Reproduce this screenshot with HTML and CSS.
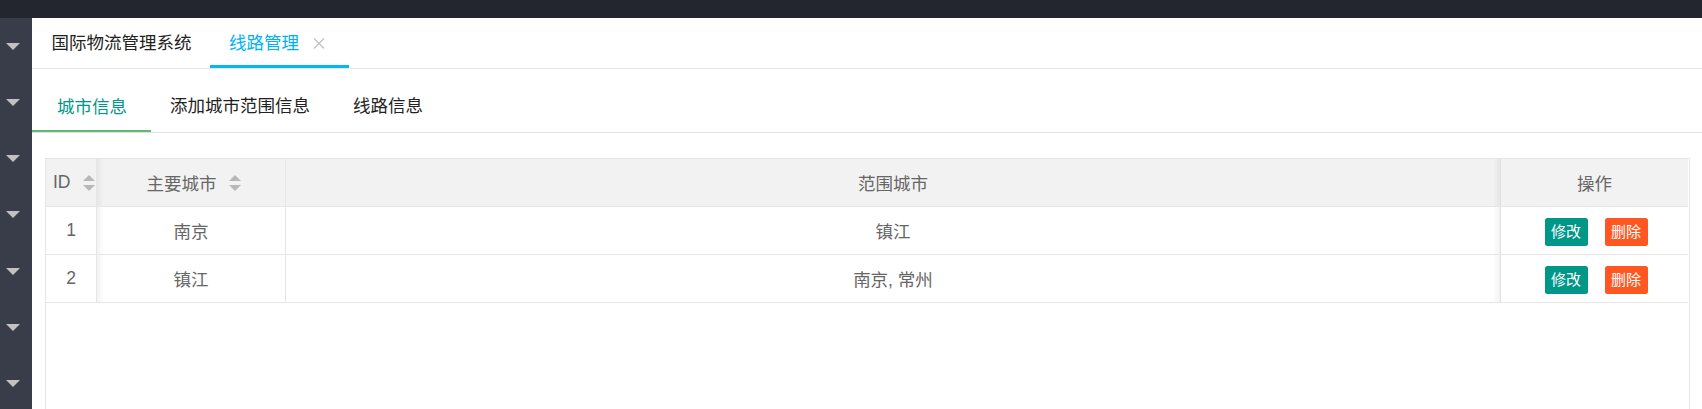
FILE: index.html
```html
<!DOCTYPE html>
<html lang="zh-CN">
<head>
<meta charset="utf-8">
<title>线路管理</title>
<link rel="stylesheet" href="styles.css">
</head>
<body>
<div class="topbar"></div>
<div class="layout">
  <aside class="side">
    <ul class="side-nav">
      <li><span class="arrow"></span></li>
      <li><span class="arrow"></span></li>
      <li><span class="arrow"></span></li>
      <li><span class="arrow"></span></li>
      <li><span class="arrow"></span></li>
      <li><span class="arrow"></span></li>
      <li><span class="arrow"></span></li>
    </ul>
  </aside>
  <main class="main">
    <ul class="page-tabs">
      <li class="page-tab">国际物流管理系统</li>
      <li class="page-tab active">线路管理<svg class="close" width="12" height="11" viewBox="0 0 12 11"><path d="M1 0.5 L11 10.5 M11 0.5 L1 10.5" stroke="#c4c4c4" stroke-width="1.4" fill="none"/></svg></li>
    </ul>
    <ul class="sub-tabs">
      <li class="sub-tab active">城市信息</li>
      <li class="sub-tab second">添加城市范围信息</li>
      <li class="sub-tab third">线路信息</li>
    </ul>
    <div class="grid-table">
      <div class="row head">
        <div class="cell c1 id-head">ID<svg class="sort" width="12" height="16" viewBox="0 0 12 16"><polygon points="0,6 6,0 12,6" fill="#b8b8b8"/><polygon points="0,10 12,10 6,16" fill="#b8b8b8"/></svg></div>
        <div class="cell c2 city-head">主要城市<svg class="sort" width="12" height="16" viewBox="0 0 12 16"><polygon points="0,6 6,0 12,6" fill="#b8b8b8"/><polygon points="0,10 12,10 6,16" fill="#b8b8b8"/></svg></div>
        <div class="cell c3">范围城市</div>
        <div class="cell c4">操作</div>
      </div>
      <div class="row">
        <div class="cell c1">1</div>
        <div class="cell c2">南京</div>
        <div class="cell c3">镇江</div>
        <div class="cell c4 ops"><span class="btn edit">修改</span><span class="btn del">删除</span></div>
      </div>
      <div class="row">
        <div class="cell c1">2</div>
        <div class="cell c2">镇江</div>
        <div class="cell c3">南京, 常州</div>
        <div class="cell c4 ops"><span class="btn edit">修改</span><span class="btn del">删除</span></div>
      </div>
    </div>
  </main>
</div>
</body>
</html>
```
FILE: styles.css
```css
* { box-sizing: border-box; }
html, body {
  margin: 0;
  padding: 0;
  width: 1702px;
  height: 409px;
  overflow: hidden;
  background: #fff;
  font-family: "Liberation Sans", "Noto Sans CJK SC", sans-serif;
}
ul { list-style: none; margin: 0; padding: 0; }

.topbar {
  height: 18px;
  background: #23262e;
}
.layout {
  display: flex;
  height: 391px;
}
.side {
  width: 32px;
  flex: none;
  background: #393d49;
  overflow: hidden;
}
.side-nav li {
  height: 56.28px;
  display: flex;
  align-items: center;
  padding-left: 6px;
}
.arrow {
  width: 0;
  height: 0;
  border-left: 7px solid transparent;
  border-right: 7px solid transparent;
  border-top: 7px solid #c2c2c2;
}

.main {
  flex: 1;
  min-width: 0;
  display: flex;
  flex-direction: column;
  overflow: hidden;
}

.page-tabs {
  display: flex;
  flex: none;
  height: 51px;
  border-bottom: 1px solid #e6e6e6;
}
.page-tab {
  height: 50px;
  line-height: 50px;
  font-size: 17.5px;
  color: #222;
  padding: 0 18.5px 0 19.5px;
  display: flex;
  align-items: center;
}
.page-tab.active {
  color: #00b2f2;
  padding: 0 24px 0 19px;
  border-bottom: 3px solid #00b7f7;
  height: 50px;
  padding-top: 3px;
}
.close {
  margin-left: 14px;
  margin-top: 1px;
}

.sub-tabs {
  display: flex;
  flex: none;
  margin-top: 12px;
  height: 52px;
  border-bottom: 1px solid #e2e2e2;
}
.sub-tab {
  height: 51px;
  line-height: 51px;
  font-size: 17.5px;
  color: #222;
  padding: 0 21.5px;
}
.sub-tab.active {
  color: #009688;
  padding: 0 24px 0 25px;
  border-bottom: 2px solid #5fb878;
  line-height: 49px;
  padding-top: 2px;
}
.sub-tab.second { padding: 0 21.5px 0 19px; }

.grid-table {
  flex: 1;
  margin: 25px 12px 0 13px;
  border: 1px solid #e6e6e6;
  border-bottom: none;
  padding-right: 1px;
  font-size: 17.5px;
  color: #666;
}
.row {
  display: grid;
  grid-template-columns: 51px 189px 1fr 188px;
  height: 48px;
  border-bottom: 1px solid #e6e6e6;
}
.row.head {
  background: #f2f2f2;
}
.cell {
  display: flex;
  align-items: center;
  justify-content: center;
  white-space: nowrap;
  overflow: hidden;
}
.c1 { border-right: 1px solid #e6e6e6; }
.c2 {
  border-right: 1px solid #e6e6e6;
  background-image: linear-gradient(to right, rgba(0, 0, 0, 0.05), rgba(0, 0, 0, 0) 7px);
}
.c3 {
  background-image: linear-gradient(to left, rgba(0, 0, 0, 0.05), rgba(0, 0, 0, 0) 7px);
}
.c4 { border-left: 1px solid #e0e0e0; }

.id-head {
  justify-content: flex-start;
  padding-left: 7px;
}
.city-head { padding-left: 5px; }
.sort {
  margin-left: 12px;
  flex: none;
}

.ops {
  gap: 17px;
  padding-left: 3px;
  padding-top: 2px;
}
.btn {
  width: 43px;
  height: 28px;
  line-height: 28px;
  text-align: center;
  font-size: 15px;
  color: #fff;
  border-radius: 2.5px;
}
.btn.edit { background: #009688; }
.btn.del { background: #ff5722; }
```
